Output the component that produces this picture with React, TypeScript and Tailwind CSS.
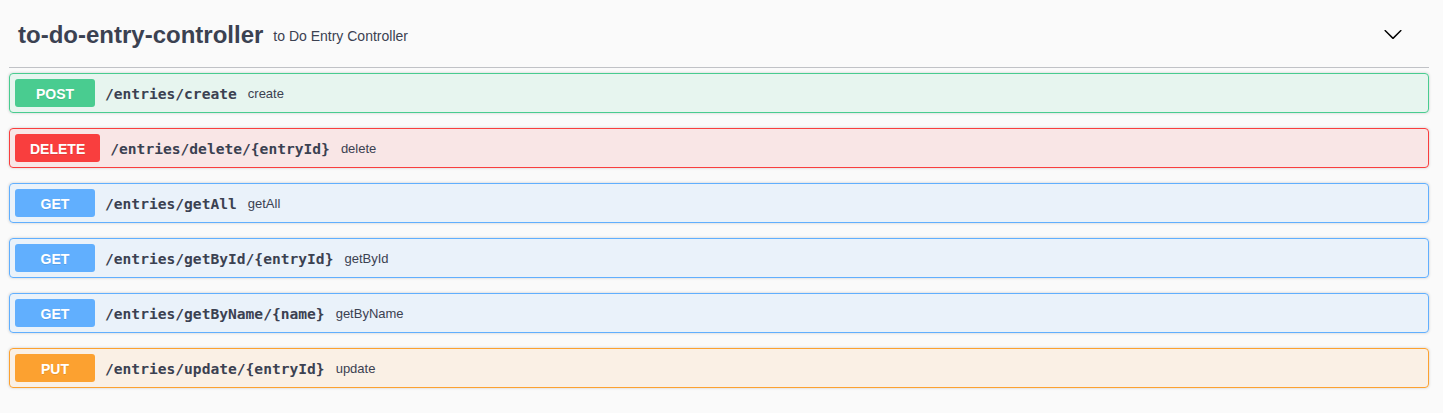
import React from "react";

type Op = {
  method: string;
  path: string;
  desc: string;
  border: string;
  bg: string;
  badge: string;
};

const ops: Op[] = [
  { method: "POST", path: "/entries/create", desc: "create", border: "border-[#49cc90]", bg: "bg-[rgba(73,204,144,0.1)]", badge: "bg-[#49cc90]" },
  { method: "DELETE", path: "/entries/delete/{entryId}", desc: "delete", border: "border-[#f93e3e]", bg: "bg-[rgba(249,62,62,0.1)]", badge: "bg-[#f93e3e]" },
  { method: "GET", path: "/entries/getAll", desc: "getAll", border: "border-[#61affe]", bg: "bg-[rgba(97,175,254,0.1)]", badge: "bg-[#61affe]" },
  { method: "GET", path: "/entries/getById/{entryId}", desc: "getById", border: "border-[#61affe]", bg: "bg-[rgba(97,175,254,0.1)]", badge: "bg-[#61affe]" },
  { method: "GET", path: "/entries/getByName/{name}", desc: "getByName", border: "border-[#61affe]", bg: "bg-[rgba(97,175,254,0.1)]", badge: "bg-[#61affe]" },
  { method: "PUT", path: "/entries/update/{entryId}", desc: "update", border: "border-[#fca130]", bg: "bg-[rgba(252,161,48,0.1)]", badge: "bg-[#fca130]" },
];

export default function App() {
  return (
    <div className="min-h-screen bg-[#fafafa] pl-[9px] pr-[14px] text-[#3b4151] font-['Liberation_Sans',Arial,sans-serif]">
      <div className="flex h-[68px] items-center border-b border-[rgba(59,65,81,0.3)] pl-[9px] pr-[26px]">
        <span className="pt-[3px] text-[24px] font-bold leading-[28px] text-[#3b4151]">to-do-entry-controller</span>
        <span className="flex-1 px-[10px] pt-[5px] text-[14px] text-[#3b4151]">to Do Entry Controller</span>
        <svg width="20" height="20" viewBox="0 0 20 20" className="text-black" fill="currentColor">
          <path d="M17.418 6.109c.272-.268.709-.268.979 0s.271.701 0 .969l-7.908 7.83c-.27.268-.707.268-.979 0l-7.908-7.83c-.27-.268-.27-.701 0-.969.271-.268.709-.268.979 0L10 13.25l7.418-7.141z" />
        </svg>
      </div>
      <div className="mt-[5px] flex flex-col gap-[15px]">
        {ops.map((op, i) => (
          <div
            key={i}
            className={`rounded-[4px] border ${op.border} ${op.bg} shadow-[0_0_3px_rgba(0,0,0,0.19)]`}
          >
            <div className="flex items-center p-[5px]">
              <span
                className={`min-w-[80px] rounded-[3px] px-[15px] pt-[7px] pb-[5px] text-center text-[14px] font-bold leading-4 text-white [text-shadow:0_1px_0_rgba(0,0,0,0.1)] ${op.badge}`}
              >
                {op.method}
              </span>
              <span className="px-[10px] pt-[2px] font-['DejaVu_Sans_Mono',monospace] text-[14.6px] font-bold text-[#3b4151]">
                {op.path}
              </span>
              <span className="flex-1 pt-[2px] pl-[1px] text-[13px] text-[#3b4151]">{op.desc}</span>
            </div>
          </div>
        ))}
      </div>
    </div>
  );
}
